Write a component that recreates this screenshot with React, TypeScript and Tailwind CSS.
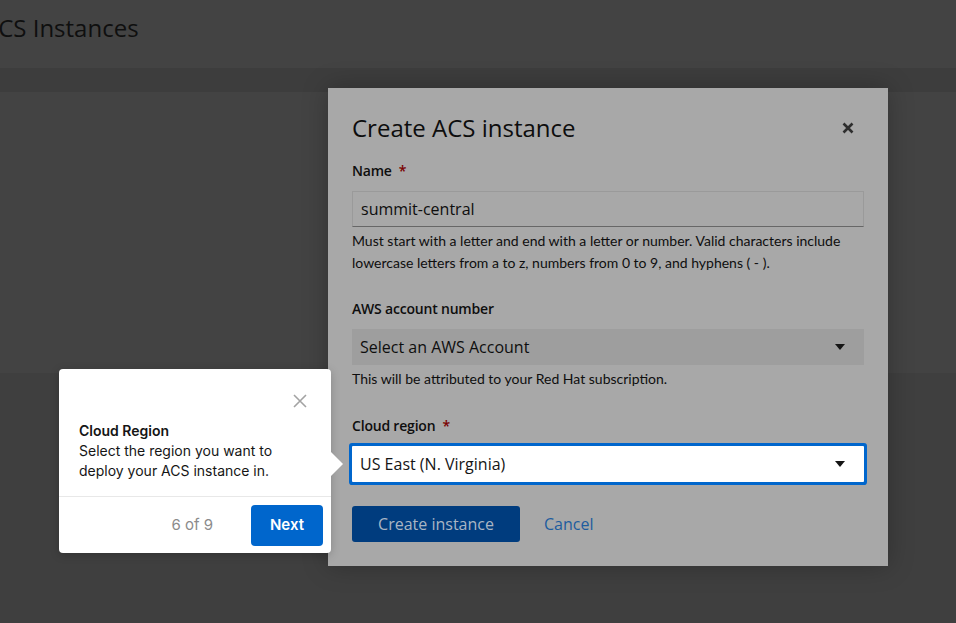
const modalFont = { fontFamily: '"Open Sans", "Liberation Sans", sans-serif' };
const helperFont = { fontFamily: 'Lato, "Liberation Sans", sans-serif' };
const tourFont = { fontFamily: 'Inter, "Liberation Sans", sans-serif' };

function Caret() {
  return (
    <svg width="10" height="6" viewBox="0 0 10 6" className="shrink-0">
      <path d="M0 0h10L5 6z" fill="#151515" />
    </svg>
  );
}

function Label({ text, required }: { text: string; required?: boolean }) {
  return (
    <div className="flex items-center text-[14px] font-semibold leading-[21px] tracking-[-0.2px] text-[#0e0e0e]">
      {text}
      {required && <span className="ml-[7px] text-[#7a0000]">*</span>}
    </div>
  );
}

function Helper({ children }: { children: React.ReactNode }) {
  return (
    <p style={helperFont} className="mt-[3px] text-[14px] leading-[22px] text-[#0e0e0e]">
      {children}
    </p>
  );
}

function CreateModal() {
  return (
    <div
      style={modalFont}
      className="absolute left-[328px] top-[88px] w-[560px] bg-[#a8a8a8] px-6 pb-6 pt-6 shadow-[0_0_24px_rgba(0,0,0,0.25)]"
    >
      <div className="flex items-center justify-between">
        <h2 className="text-[24px] leading-[32px] text-[#0d0d0d]">Create ACS instance</h2>
        <svg width="12" height="12" viewBox="0 0 12 12" className="mr-[10px]">
          <path d="M1.5 1.5l9 9M10.5 1.5l-9 9" stroke="#2e2e2e" strokeWidth="2.6" />
        </svg>
      </div>

      <div className="mt-4">
        <Label text="Name" required />
        <div className="mt-[10px] flex h-9 items-center border border-[#9a9a9a] border-b-[#676767] bg-[#a8a8a8] px-2 text-[16px] text-[#0e0e0e]">
          summit-central
        </div>
        <Helper>
          Must start with a letter and end with a letter or number. Valid characters include
          lowercase letters from a to z, numbers from 0 to 9, and hyphens ( - ).
        </Helper>
      </div>

      <div className="mt-6">
        <Label text="AWS account number" />
        <div className="mt-[10px] flex h-9 items-center justify-between bg-[#9e9e9e] pl-2 pr-[19px] text-[16px] text-[#0e0e0e]">
          Select an AWS Account
          <Caret />
        </div>
        <Helper>This will be attributed to your Red Hat subscription.</Helper>
      </div>

      <div className="mt-[25px]">
        <Label text="Cloud region" required />
        <div className="mt-[10px] flex h-9 items-center justify-between rounded-[1px] bg-white pl-2 pr-[19px] text-[16px] text-[#151515] ring-[3px] ring-[#0066cc]">
          US East (N. Virginia)
          <Caret />
        </div>
      </div>

      <div className="mt-6 flex items-center">
        <div className="flex h-9 w-[168px] items-center justify-center rounded-[3px] bg-[#003c7e] text-[16px] text-[#a9b5c4]">
          Create instance
        </div>
        <span className="ml-6 text-[16px] text-[#1d5c9e]">Cancel</span>
      </div>
    </div>
  );
}

function TourTip() {
  return (
    <div
      style={tourFont}
      className="absolute left-[59px] top-[369px] w-[272px] rounded-[4px] bg-white shadow-[0_2px_10px_rgba(0,0,0,0.2)]"
    >
      <div className="absolute right-[-12px] top-[83px] h-0 w-0 border-y-[12px] border-l-[12px] border-y-transparent border-l-white" />
      <div className="px-5 pb-4 pt-5">
        <div className="flex h-6 items-center justify-end pr-1">
          <svg width="14" height="14" viewBox="0 0 14 14">
            <path d="M1 1l12 12M13 1L1 13" stroke="#a3a3a3" strokeWidth="1.6" />
          </svg>
        </div>
        <div className="mt-2 text-[14px] font-semibold leading-[20px] text-[#151515]">Cloud Region</div>
        <p className="text-[14px] leading-[19.5px] text-[#151515]">
          Select the region you want to deploy your ACS instance in.
        </p>
      </div>
      <div className="flex items-center justify-end border-t border-[#e8e8e8] px-2 pb-[7px] pt-2">
        <span className="mr-[38px] text-[15px] text-[#8b8b8b]">6 of 9</span>
        <div className="flex h-[41px] w-[72px] items-center justify-center rounded-[4px] bg-[#0066cc] text-[15px] font-semibold text-white">
          Next
        </div>
      </div>
    </div>
  );
}

export default function App() {
  return (
    <main className="relative h-[623px] w-[956px] overflow-hidden bg-[#3f3f3f]">
      <header className="flex h-[68px] items-start bg-[#434343] pt-[12px]">
        <h1
          style={{ fontFamily: '"Open Sans", "Liberation Sans", sans-serif' }}
          className="-ml-[17px] text-[24px] leading-[32px] text-[#0f0f0f]"
        >
          ACS Instances
        </h1>
      </header>
      <div className="h-6 bg-[#3d3d3d]" />
      <section className="h-[281px] bg-[#434343]" />

      <CreateModal />
      <TourTip />
    </main>
  );
}
